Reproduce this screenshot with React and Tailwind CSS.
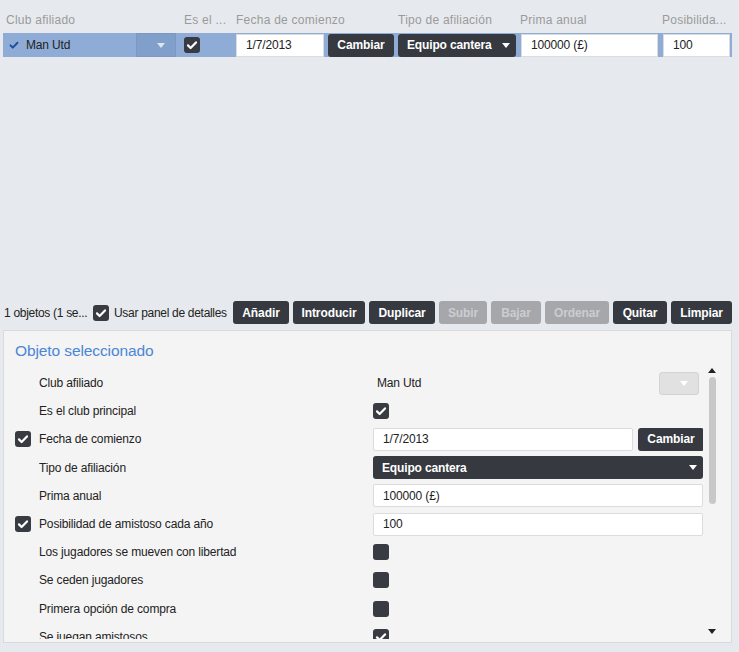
import React from 'react';

const Check = ({ className = '' }) => (
  <svg viewBox="0 0 16 16" className={className} fill="none">
    <path d="M4 8.4l2.6 2.6L12 5.4" stroke="currentColor" strokeWidth="2.2" strokeLinecap="round" strokeLinejoin="round" />
  </svg>
);

const Box = ({ checked = true }) => (
  <div className="w-4 h-4 rounded-[3px] bg-[#383b42] flex items-center justify-center text-white shrink-0">
    {checked && <Check className="w-4 h-4" />}
  </div>
);

const Caret = ({ className = 'text-white' }) => (
  <svg viewBox="0 0 8 5" className={`w-2 h-[5px] ${className}`}>
    <path d="M0 0h8L4 5z" fill="currentColor" />
  </svg>
);

const Btn = ({ children, w, off }) => (
  <button
    className={`${w} h-[23px] rounded-[3px] text-[12px] font-bold tracking-[-0.1px] flex items-center justify-center shrink-0 ${
      off ? 'bg-[#a5a7ab] text-[#cbcdd0]' : 'bg-[#363940] text-white'
    }`}
  >
    {children}
  </button>
);

const Field = ({ children, w }) => (
  <div className={`${w} h-[23px] bg-white border border-[#dcdcdc] rounded-[2px] flex items-center pl-[9px] text-[12px] text-[#222] shrink-0`}>
    {children}
  </div>
);

export default function App() {
  const rows = [
    { label: 'Club afiliado', value: 'club' },
    { label: 'Es el club principal', value: 'check' },
    { label: 'Fecha de comienzo', value: 'date', checked: true },
    { label: 'Tipo de afiliación', value: 'tipo' },
    { label: 'Prima anual', value: 'prima' },
    { label: 'Posibilidad de amistoso cada año', value: 'posib', checked: true },
    { label: 'Los jugadores se mueven con libertad', value: 'empty' },
    { label: 'Se ceden jugadores', value: 'empty' },
    { label: 'Primera opción de compra', value: 'empty' },
    { label: 'Se juegan amistosos', value: 'check' },
  ];

  const renderValue = (v) => {
    switch (v) {
      case 'club':
        return (
          <div className="flex items-center w-full">
            <span className="flex-1 pl-[4px]">Man Utd</span>
            <div className="w-[40px] h-[23px] mr-[4px] bg-[#e1e1e1] border border-[#d3d3d3] rounded-[3px] flex items-center justify-end pr-[10px]">
              <Caret className="text-white" />
            </div>
          </div>
        );
      case 'check':
        return <Box />;
      case 'empty':
        return <Box checked={false} />;
      case 'date':
        return (
          <div className="flex items-center gap-[5px]">
            <Field w="w-[260px]">1/7/2013</Field>
            <Btn w="w-[66px]">Cambiar</Btn>
          </div>
        );
      case 'tipo':
        return (
          <div className="w-[330px] h-[23px] rounded-[3px] bg-[#363940] text-white font-bold text-[12px] flex items-center justify-between pl-[9px] pr-[6px]">
            <span>Equipo cantera</span>
            <Caret />
          </div>
        );
      case 'prima':
        return <Field w="w-[330px]">100000 (£)</Field>;
      case 'posib':
        return <Field w="w-[330px]">100</Field>;
      default:
        return null;
    }
  };

  return (
    <div
      className="w-[739px] h-[652px] bg-[#e6eaee] flex flex-col text-[12px] text-[#222] tracking-[-0.15px] overflow-hidden"
      style={{ fontFamily: '"Liberation Sans", Arial, sans-serif' }}
    >
      {/* Table */}
      <div className="flex-1 pt-[10px] px-[3px]">
        <div className="flex h-[20px] items-center text-[#9a9a9a] tracking-[0.25px]">
          <div className="w-[181px] pl-[3px]">Club afiliado</div>
          <div className="w-[52px]">Es el ...</div>
          <div className="w-[162px]">Fecha de comienzo</div>
          <div className="w-[122px]">Tipo de afiliación</div>
          <div className="w-[142px]">Prima anual</div>
          <div>Posibilida...</div>
        </div>
        <div className="mt-[3px] h-[24px] w-[729px] bg-[#8eacd6] flex items-center">
          <div className="w-[173px] h-full flex items-center">
            <Check className="w-[14px] h-[14px] text-[#1e4f9e] ml-[4px]" />
            <span className="ml-[5px] flex-1">Man Utd</span>
            <div className="w-[40px] h-full bg-[#819fcb] border border-[#7c98c2] flex items-center justify-end pr-[10px]">
              <Caret className="text-[#dfe6f0]" />
            </div>
          </div>
          <div className="w-[60px] pl-[8px]">
            <Box />
          </div>
          <Field w="w-[88px] h-[22px] rounded-none">1/7/2013</Field>
          <div className="ml-[4px]">
            <Btn w="w-[66px]">Cambiar</Btn>
          </div>
          <div className="ml-[4px] w-[118px] h-[23px] rounded-[3px] bg-[#363940] text-white font-bold flex items-center justify-between pl-[9px] pr-[6px]">
            <span>Equipo cantera</span>
            <Caret />
          </div>
          <div className="ml-[5px]">
            <Field w="w-[137px] h-[22px] rounded-none">100000 (£)</Field>
          </div>
          <div className="ml-[5px]">
            <Field w="w-[67px] h-[22px] rounded-none">100</Field>
          </div>
        </div>
      </div>

      {/* Toolbar */}
      <div className="h-[23px] flex items-center pl-[4px] mb-[6px]">
        <span className="w-[89px] whitespace-nowrap tracking-[-0.3px]">1 objetos (1 se...</span>
        <Box />
        <span className="ml-[5px] w-[119px] whitespace-nowrap tracking-[-0.3px]">Usar panel de detalles</span>
        <div className="flex gap-[4px]">
          <Btn w="w-[56px]">Añadir</Btn>
          <Btn w="w-[72px]">Introducir</Btn>
          <Btn w="w-[66px]">Duplicar</Btn>
          <Btn w="w-[48px]" off>Subir</Btn>
          <Btn w="w-[50px]" off>Bajar</Btn>
          <Btn w="w-[64px]" off>Ordenar</Btn>
          <Btn w="w-[54px]">Quitar</Btn>
          <Btn w="w-[61px]">Limpiar</Btn>
        </div>
      </div>

      {/* Details panel */}
      <div className="ml-[3px] mb-[9px] w-[729px] h-[313px] bg-[#f4f4f4] border border-[#dadada] flex flex-col">
        <div className="pl-[11px] pt-[8px] h-[36px] text-[15.5px] tracking-[-0.1px] text-[#4a86d4]">Objeto seleccionado</div>
        <div className="flex">
          <div className="h-[272px] overflow-hidden pl-[11px] pt-[2px]">
            {rows.map((r) => (
              <div key={r.label} className="h-[28.2px] flex items-center">
                <div className="w-[24px]">{r.checked && <Box />}</div>
                <div className="w-[334px]">{r.label}</div>
                <div className="w-[330px] flex items-center">{renderValue(r.value)}</div>
              </div>
            ))}
          </div>
          <div className="ml-[4px] w-[10px] flex flex-col items-center h-[272px]">
            <Caret className="text-[#222] rotate-180 mt-[1px]" />
            <div className="mt-[4px] w-[7px] h-[127px] rounded-full bg-[#c8c8c8]" />
            <div className="flex-1" />
            <Caret className="text-[#222] mb-[5px]" />
          </div>
        </div>
      </div>
    </div>
  );
}
